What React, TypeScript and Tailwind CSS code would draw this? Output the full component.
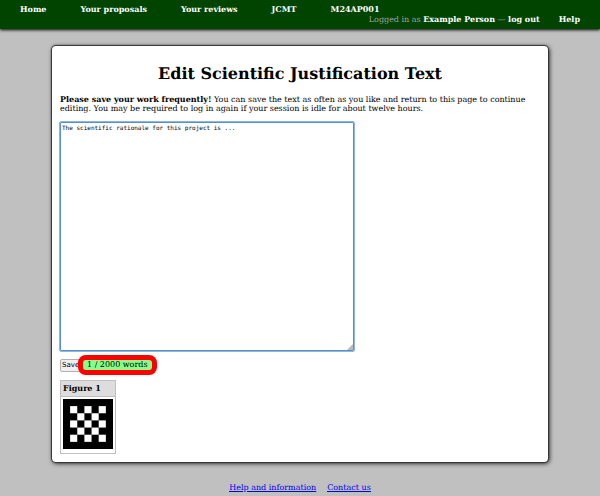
const navItems = ["Home", "Your proposals", "Your reviews", "JCMT", "M24AP001"];

function Header() {
  return (
    <header className="bg-[#004400] px-5 pt-1 pb-1 font-bold text-white shadow-[0_1px_3px_#000000]">
      <nav className="flex h-[10px] gap-[34px]">
        {navItems.map((item) => (
          <a key={item} href="#">
            {item}
          </a>
        ))}
      </nav>
      <div className="flex justify-end gap-[19px]">
        <p className="font-normal text-[#a0a0a0]">
          Logged in as{" "}
          <a href="#" className="font-bold text-white">
            Example Person
          </a>{" "}
          —{" "}
          <a href="#" className="font-bold text-white">
            log out
          </a>
        </p>
        <a href="#">Help</a>
      </div>
    </header>
  );
}

function Checkerboard() {
  const squares = Array.from({ length: 25 }, (_, i) => i).filter((i) => i % 2 === 0);
  return (
    <svg viewBox="0 0 50 50" className="block size-[50px] bg-black" role="img" aria-label="Figure 1">
      {squares.map((i) => (
        <rect
          key={i}
          x={7.1 + (i % 5) * 7.15}
          y={7.1 + Math.floor(i / 5) * 7.15}
          width="7.15"
          height="7.15"
          fill="#ffffff"
        />
      ))}
    </svg>
  );
}

export default function App() {
  return (
    <div className="min-h-screen bg-[#c0c0c0] font-['DejaVu_Serif',serif] text-[8px] leading-[10px] text-black [text-rendering:geometricPrecision]">
      <Header />
      <main className="mx-[52px] mt-[17px] rounded-[4px] bg-white px-2 pt-[18px] pb-2 shadow-[0_0_1px_1px_#333333,1px_1px_5px_#000000]">
        <h1 className="text-center text-[16px] leading-5 font-bold">
          Edit Scientific Justification Text
        </h1>
        <p className="mt-[11px] leading-[9px]">
          <strong>Please save your work frequently!</strong> You can save the text as often as you
          like and return to this page to continue editing. You may be required to log in again if
          your session is idle for about twelve hours.
        </p>
        <form className="mt-[9px]" onSubmit={(event) => event.preventDefault()}>
          <div className="relative w-[294px] max-w-full">
            <textarea
              aria-label="Scientific justification"
              defaultValue="The scientific rationale for this project is ..."
              className="block h-[229px] w-full resize-none rounded-[1px] border border-[#5590cc] bg-white px-[1px] py-[2px] font-['DejaVu_Sans_Mono',monospace] text-[6px] leading-[7px] outline-1 outline-[#8fb5e0] [text-rendering:geometricPrecision]"
            />
            <svg
              viewBox="0 0 6 6"
              className="pointer-events-none absolute right-[1px] bottom-[1px] size-[6px]"
              aria-hidden="true"
            >
              <path d="M6 0V6H0Z" fill="#b8b8b8" />
            </svg>
          </div>
          <div className="mt-[6px] flex h-4 items-center">
            <button
              type="submit"
              className="h-[13px] w-[23px] rounded-[2px] border border-[#b0b0b0] bg-[#efefef] pl-[1px] text-left font-['DejaVu_Sans',sans-serif] text-[7px] leading-[10px] [text-rendering:geometricPrecision]"
            >
              Save
            </button>
            <output className="rounded-[3px] bg-[#88ff88] px-1 leading-[10px] ring-5 ring-[#ff0000]">
              1 / 2000 words
            </output>
          </div>
        </form>
        <figure className="mt-[7px] w-14 border border-[#c0c0c0]">
          <figcaption className="border-b border-[#c0c0c0] bg-[#dddddd] px-[2px] py-[2px] leading-[11px] font-bold">
            Figure 1
          </figcaption>
          <div className="px-[2px] pt-[2px] pb-1">
            <Checkerboard />
          </div>
        </figure>
      </main>
      <footer className="flex justify-center gap-[11px] pt-[21px] text-[#0000ee] underline">
        <a href="#">Help and information</a>
        <a href="#">Contact us</a>
      </footer>
    </div>
  );
}
